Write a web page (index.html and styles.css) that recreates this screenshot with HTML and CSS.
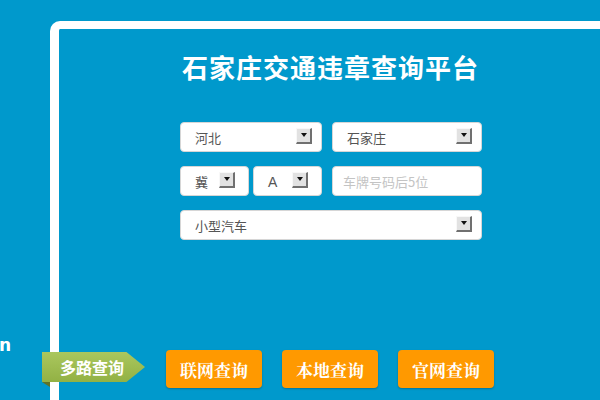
FILE: index.html
```html
<!DOCTYPE html>
<html lang="zh-CN">
<head>
<meta charset="utf-8">
<title>石家庄交通违章查询平台</title>
<link rel="stylesheet" href="styles.css">
</head>
<body>
<div class="page">
  <div class="side"><span class="cut">n</span></div>
  <div class="frame">
    <h1 class="title">石家庄交通违章查询平台</h1>
    <div class="form">
      <div class="row">
        <div class="sel w142"><span class="val">河北</span><span class="arr"></span></div>
        <div class="sel w150"><span class="val">石家庄</span><span class="arr"></span></div>
      </div>
      <div class="row">
        <div class="sel w69 small"><span class="val">冀</span><span class="arr"></span></div>
        <div class="sel w69 small tight"><span class="val latin">A</span><span class="arr"></span></div>
        <input class="plate" type="text" placeholder="车牌号码后5位">
      </div>
      <div class="row">
        <div class="sel w302"><span class="val">小型汽车</span><span class="arr"></span></div>
      </div>
    </div>
    <div class="actions">
      <div class="tagwrap"><div class="tag">多路查询</div></div>
      <button class="btn">联网查询</button>
      <button class="btn">本地查询</button>
      <button class="btn">官网查询</button>
    </div>
  </div>
</div>
</body>
</html>
```

FILE: styles.css
```css
html, body {
  margin: 0;
  padding: 0;
}
body {
  background: #0099cc;
  font-family: "Noto Sans CJK SC", "DejaVu Sans", sans-serif;
  overflow: hidden;
}
.page {
  display: flex;
  width: 600px;
  height: 400px;
  overflow: hidden;
}
.side {
  flex: 0 0 50px;
  padding-top: 334px;
  box-sizing: border-box;
}
.cut {
  display: block;
  color: #fff;
  font-family: "DejaVu Sans", sans-serif;
  font-weight: bold;
  font-size: 17px;
  line-height: 22px;
  margin-left: -1px;
}
.frame {
  flex: 0 0 auto;
  margin-top: 21px;
  width: 600px;
  height: 440px;
  border-top: 8px solid #fff;
  border-left: 9px solid #fff;
  border-radius: 10px 0 0 0;
  box-sizing: content-box;
}
.title {
  margin: 0;
  padding-top: 23px;
  width: 543px;
  text-align: center;
  color: #fff;
  font-size: 26px;
  line-height: 30px;
  font-weight: bold;
  letter-spacing: 1px;
}
.form {
  margin-left: 121px;
  margin-top: 40px;
  width: 302px;
  display: flex;
  flex-direction: column;
  gap: 14px;
}
.row {
  display: flex;
  gap: 10px;
}
.sel, .plate {
  height: 30px;
  box-sizing: border-box;
  background: #fff;
  border: 1px solid #d6d6d6;
  border-radius: 4px;
  display: flex;
  align-items: center;
  justify-content: space-between;
  padding: 0 9px 0 14px;
  font-size: 13px;
  color: #555;
}
.w142 { width: 142px; }
.w150 { width: 150px; }
.w69 { width: 69px; }
.w302 { width: 302px; }
.small { padding-right: 13px; }
.tight { margin-left: -6px; }
.val {
  line-height: 1;
  margin-top: 1px;
}
.latin {
  font-family: "Liberation Sans", sans-serif;
  font-size: 14px;
}
.arr {
  width: 16px;
  height: 16px;
  box-sizing: border-box;
  background: #e2e2e2;
  border-top: 1px solid #f8f8f8;
  border-left: 1px solid #f8f8f8;
  border-right: 2px solid #707070;
  border-bottom: 2px solid #707070;
  display: flex;
  align-items: center;
  justify-content: center;
  margin-top: -3px;
}
.arr::after {
  content: "";
  width: 0;
  height: 0;
  border-left: 3px solid transparent;
  border-right: 3px solid transparent;
  border-top: 4px solid #111;
}
.plate {
  width: 150px;
  padding-left: 10px;
  font-family: "Noto Sans CJK SC", sans-serif;
  outline: none;
}
.plate::placeholder {
  color: #c4c4c4;
}
.actions {
  margin-top: 110px;
  margin-left: -17px;
  display: flex;
  align-items: flex-start;
}
.tagwrap {
  position: relative;
  margin-top: 2px;
  margin-right: 21px;
}
.tagwrap::after {
  content: "";
  position: absolute;
  left: 0;
  top: 30px;
  width: 0;
  height: 0;
  border-top: 5px solid #5f7327;
  border-left: 8px solid transparent;
}
.tag {
  width: 103px;
  height: 30px;
  box-sizing: border-box;
  padding-left: 18px;
  background: linear-gradient(#aac75e, #92b144);
  clip-path: polygon(0 0, 82% 0, 100% 50%, 82% 100%, 0 100%);
  color: #fff;
  font-weight: bold;
  font-size: 16px;
  line-height: 30px;
}
.btn {
  width: 96px;
  height: 38px;
  margin-right: 20px;
  border: none;
  border-radius: 4px;
  background: #ff9900;
  box-shadow: 0 1px 2px rgba(0, 0, 0, 0.25);
  color: #fff;
  font-family: "Noto Serif CJK SC", "Noto Sans CJK SC", serif;
  font-weight: bold;
  font-size: 17px;
  padding: 0;
}
```
